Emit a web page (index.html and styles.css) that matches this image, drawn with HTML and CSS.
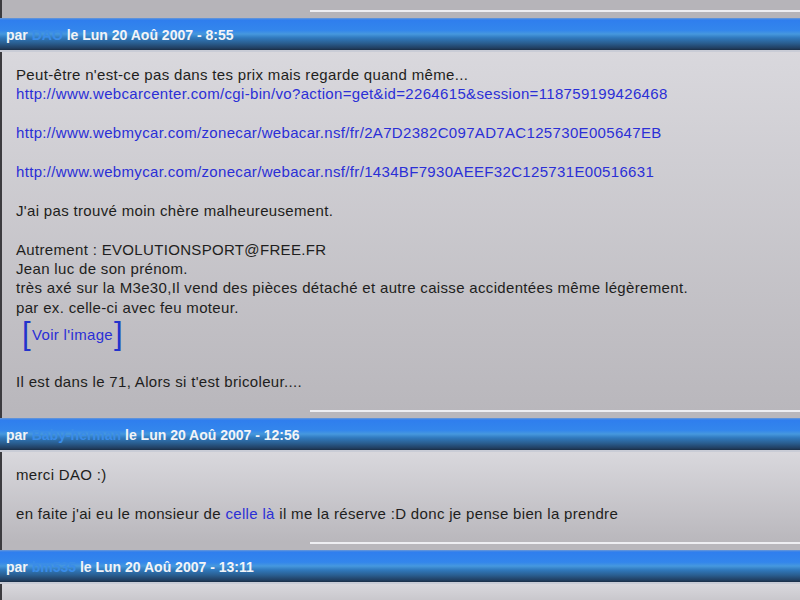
FILE: index.html
```html
<!DOCTYPE html>
<html lang="fr">

<head>
  <meta charset="UTF-8" />
  <meta name="viewport" content="width=device-width, initial-scale=1.0" />
  <link rel="stylesheet" href="styles.css">
  <title>Forum - sujet</title>
</head>

<body>
  <div class="topic">
    <div class="post-foot"><span class="rule"></span></div>

    <div class="post">
      <div class="post-head">par <a class="author" href="#">DAO</a> le Lun 20 Aoû 2007 - 8:55</div>
      <div class="post-body">
        Peut-être n'est-ce pas dans tes prix mais regarde quand même...<br>
        <a href="#">http://www.webcarcenter.com/cgi-bin/vo?action=get&amp;id=2264615&amp;session=118759199426468</a><br>
        <br>
        <a href="#">http://www.webmycar.com/zonecar/webacar.nsf/fr/2A7D2382C097AD7AC125730E005647EB</a><br>
        <br>
        <a href="#">http://www.webmycar.com/zonecar/webacar.nsf/fr/1434BF7930AEEF32C125731E00516631</a><br>
        <br>
        J'ai pas trouvé moin chère malheureusement.<br>
        <br>
        Autrement : EVOLUTIONSPORT@FREE.FR<br>
        Jean luc de son prénom.<br>
        très axé sur la M3e30,Il vend des pièces détaché et autre caisse accidentées même légèrement.<br>
        par ex. celle-ci avec feu moteur.
        <div class="img-link"><span class="bracket">[</span><a href="#">Voir l'image</a><span class="bracket">]</span></div>
        <br>
        Il est dans le 71, Alors si t'est bricoleur....
      </div>
      <div class="post-foot"><span class="rule"></span></div>
    </div>

    <div class="post">
      <div class="post-head">par <a class="author" href="#">Baby-herman</a> le Lun 20 Aoû 2007 - 12:56</div>
      <div class="post-body">
        merci DAO :)<br>
        <br>
        en faite j'ai eu le monsieur de <a href="#">celle là</a> il me la réserve :D donc je pense bien la prendre
      </div>
      <div class="post-foot"><span class="rule"></span></div>
    </div>

    <div class="post">
      <div class="post-head">par <a class="author" href="#">bm535</a> le Lun 20 Aoû 2007 - 13:11</div>
      <div class="post-body"></div>
    </div>
  </div>
</body>

</html>
```

FILE: styles.css
```css
*,
*::after,
*::before {
  box-sizing: border-box;
}

body {
  margin: 0;
  background-color: #b6b4b9;
  font-family: "Liberation Sans", Arial, sans-serif;
  overflow: hidden;
}

.topic {
  border-left: 2px solid #3c3b3f;
  min-height: 600px;
}

.post-foot {
  display: flex;
  justify-content: flex-end;
  padding-top: 10px;
  padding-bottom: 6px;
}

.post-body + .post-foot {
  background-color: #b9b7bc;
  padding-top: 0;
}

.rule {
  display: block;
  width: 490px;
  height: 2px;
  background-color: #eeeef2;
}

.post-head {
  margin-left: -2px;
  height: 34px;
  padding: 9px 6px 0;
  font-size: 14px;
  font-weight: bold;
  color: #f2f4f8;
  background: linear-gradient(to bottom,
      #6a98d6 0,
      #2f7eee 2px,
      #3386ec 38%,
      #4698de 50%,
      #3079bd 62%,
      #2a5f92 78%,
      #213f62 94%,
      #1a2e46 100%);
  border-bottom: 2px solid #c9ccd6;
}

.author {
  color: #3a8ce8;
  text-decoration: none;
}

.post-body {
  padding: 13px 14px 19px;
  font-size: 15px;
  letter-spacing: 0.33px;
  line-height: 19.4px;
  color: #1e1e20;
  background: linear-gradient(to bottom, #d9d8dd, #b9b7bc);
}

.post-body a {
  color: #2b2fd6;
  text-decoration: none;
}

.img-link {
  padding-left: 6px;
  height: 28px;
  display: flex;
  align-items: center;
  margin-top: 3px;
  margin-bottom: 4px;
}

.img-link .bracket {
  color: #2233cc;
  font-size: 31px;
  line-height: 28px;
}

.img-link a {
  padding: 0 1px;
}
```
